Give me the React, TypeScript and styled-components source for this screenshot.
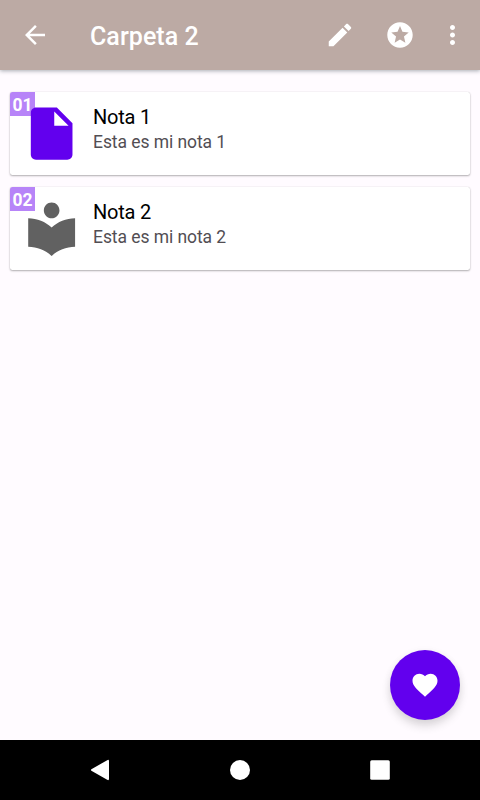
import React from "react";
import styled, { createGlobalStyle } from "styled-components";

const GlobalStyle = createGlobalStyle`
  * { box-sizing: border-box; }
  body { margin: 0; background: #fffbff; font-family: Roboto, "Liberation Sans", sans-serif; }
  button { border: 0; padding: 0; background: none; color: inherit; font: inherit; display: block; }
  svg { display: block; }
`;

const Screen = styled.div`
  position: relative;
  width: 480px;
  height: 800px;
  display: flex;
  flex-direction: column;
  background: #fffbff;
  overflow: hidden;
`;

const Toolbar = styled.header`
  height: 70px;
  flex: none;
  display: flex;
  align-items: center;
  padding: 0 13px 0 20px;
  background: #bcaaa4;
  color: #fff;
  box-shadow: 0 1px 4px rgba(60, 75, 85, 0.45);
`;

const Title = styled.h1`
  flex: 1;
  margin: 0 0 0 40px;
  padding-top: 3px;
  font-size: 25px;
  line-height: 30px;
  font-weight: 500;
  letter-spacing: 0.05px;
`;

const Action = styled.button<{ $gap?: number }>`
  margin-left: ${(p) => p.$gap ?? 0}px;
`;

const Notes = styled.main`
  flex: 1;
  display: flex;
  flex-direction: column;
  gap: 12px;
  padding: 22px 10px 0;
`;

const Card = styled.article`
  position: relative;
  height: 83px;
  display: flex;
  padding: 10px 10px 0;
  background: #fff;
  border-radius: 2.5px;
  box-shadow: 0 1px 2px rgba(0, 0, 0, 0.3), 0 0 1px rgba(0, 0, 0, 0.2);
`;

const Badge = styled.span`
  position: absolute;
  left: 0;
  top: 0;
  width: 25px;
  height: 24px;
  border-top-left-radius: 2.5px;
  background: #b784f8;
  color: #fff;
  font-size: 17.5px;
  line-height: 27px;
  font-weight: 700;
  text-align: center;
`;

const Picture = styled.div`
  position: relative;
  width: 63px;
  height: 63px;
`;

const Copy = styled.div`
  margin-left: 10px;
`;

const NoteTitle = styled.h2`
  margin: 2.5px 0 0;
  font-size: 20px;
  line-height: 25px;
  font-weight: 400;
  letter-spacing: -0.2px;
  color: #000;
`;

const NoteText = styled.p`
  margin: 0;
  font-size: 17.5px;
  line-height: 25px;
  letter-spacing: -0.07px;
  color: #524e53;
`;

const Fab = styled.button`
  && {
    position: absolute;
    right: 20px;
    bottom: 80px;
    width: 70px;
    height: 70px;
    display: flex;
    align-items: center;
    justify-content: center;
    border-radius: 50%;
    background: #6200ee;
    color: #fff;
    box-shadow: 0 6px 10px rgba(0, 0, 0, 0.14), 0 1px 8px rgba(0, 0, 0, 0.04);
  }
`;

const NavBar = styled.nav`
  height: 60px;
  flex: none;
  display: flex;
  align-items: center;
  justify-content: center;
  gap: 110px;
  background: #000;
  color: #fff;
`;

const shapes = {
  back: "M20 11H7.83l5.59-5.59L12 4l-8 8 8 8 1.41-1.41L7.83 13H20v-2z",
  edit: "M3 17.25V21h3.75L17.81 9.94l-3.75-3.75L3 17.25zM20.71 7.04c.39-.39.39-1.02 0-1.41l-2.34-2.34c-.39-.39-1.02-.39-1.41 0l-1.83 1.83 3.75 3.75 1.83-1.83z",
  stars: "M11.99 2C6.47 2 2 6.48 2 12s4.47 10 9.99 10C17.52 22 22 17.52 22 12S17.52 2 11.99 2zm4.24 16L12 15.45 7.77 18l1.12-4.81-3.73-3.23 4.92-.42L12 5l1.92 4.53 4.92.42-3.73 3.23L16.23 18z",
  more: "M12 8c1.1 0 2-.9 2-2s-.9-2-2-2-2 .9-2 2 .9 2 2 2zm0 2c-1.1 0-2 .9-2 2s.9 2 2 2 2-.9 2-2-.9-2-2-2zm0 6c-1.1 0-2 .9-2 2s.9 2 2 2 2-.9 2-2-.9-2-2-2z",
  file: "M6 2c-1.1 0-1.99.9-1.99 2L4 20c0 1.1.89 2 1.99 2H18c1.1 0 2-.9 2-2V8l-6-6H6zm7 7V3.5L18.5 9H13z",
  reader: "M12 11.55C9.64 9.35 6.48 8 3 8v11c3.48 0 6.64 1.35 9 3.55 2.36-2.19 5.52-3.55 9-3.55V8c-3.48 0-6.64 1.35-9 3.55zM12 8c1.66 0 3-1.34 3-3s-1.34-3-3-3-3 1.34-3 3 1.34 3 3 3z",
  heart: "M12 21.35l-1.45-1.32C5.4 15.36 2 12.28 2 8.5 2 5.42 4.42 3 7.5 3c1.74 0 3.41.81 4.5 2.09C13.09 3.81 14.76 3 16.5 3 19.58 3 22 5.42 22 8.5c0 3.78-3.4 6.86-8.55 11.54L12 21.35z",
};

type IconProps = { name: keyof typeof shapes; size?: number; color?: string; box?: string };

const Icon = ({ name, size = 30, color = "currentColor", box = "0 0 24 24" }: IconProps) => (
  <svg width={size} height={size} viewBox={box} fill={color}>
    <path d={shapes[name]} />
  </svg>
);

const notes: { id: string; title: string; text: string; icon: keyof typeof shapes; color: string }[] = [
  { id: "01", title: "Nota 1", text: "Esta es mi nota 1", icon: "file", color: "#6200ee" },
  { id: "02", title: "Nota 2", text: "Esta es mi nota 2", icon: "reader", color: "#616161" },
];

export default function App() {
  return (
    <>
      <GlobalStyle />
      <Screen>
        <Toolbar>
          <Action aria-label="Volver"><Icon name="back" /></Action>
          <Title>Carpeta 2</Title>
          <Action aria-label="Editar"><Icon name="edit" /></Action>
          <Action aria-label="Favorito" $gap={30}><Icon name="stars" box="0.2 0.2 23.6 23.6" /></Action>
          <Action aria-label="Más opciones" $gap={22}><Icon name="more" box="-0.4 0 24 24" /></Action>
        </Toolbar>
        <Notes>
          {notes.map((note) => (
            <Card key={note.id}>
              <Badge>{note.id}</Badge>
              <Picture>
                <Icon name={note.icon} size={63} color={note.color} box="-0.15 -0.15 24.19 24.19" />
              </Picture>
              <Copy>
                <NoteTitle>{note.title}</NoteTitle>
                <NoteText>{note.text}</NoteText>
              </Copy>
            </Card>
          ))}
        </Notes>
        <NavBar>
          <svg width="30" height="30" viewBox="0 0 30 30" fill="currentColor">
            <path d="M22.2 5.2Q24 4.2 24 6.2V23.8Q24 25.8 22.2 24.8L6.8 16Q5 15 6.8 14Z" />
          </svg>
          <svg width="30" height="30" viewBox="0 0 30 30" fill="currentColor">
            <circle cx="15" cy="15" r="10" />
          </svg>
          <svg width="30" height="30" viewBox="0 0 30 30" fill="currentColor">
            <rect x="5.2" y="5.2" width="19.6" height="19.6" rx="1.5" />
          </svg>
        </NavBar>
        <Fab aria-label="Me gusta"><Icon name="heart" /></Fab>
      </Screen>
    </>
  );
}
